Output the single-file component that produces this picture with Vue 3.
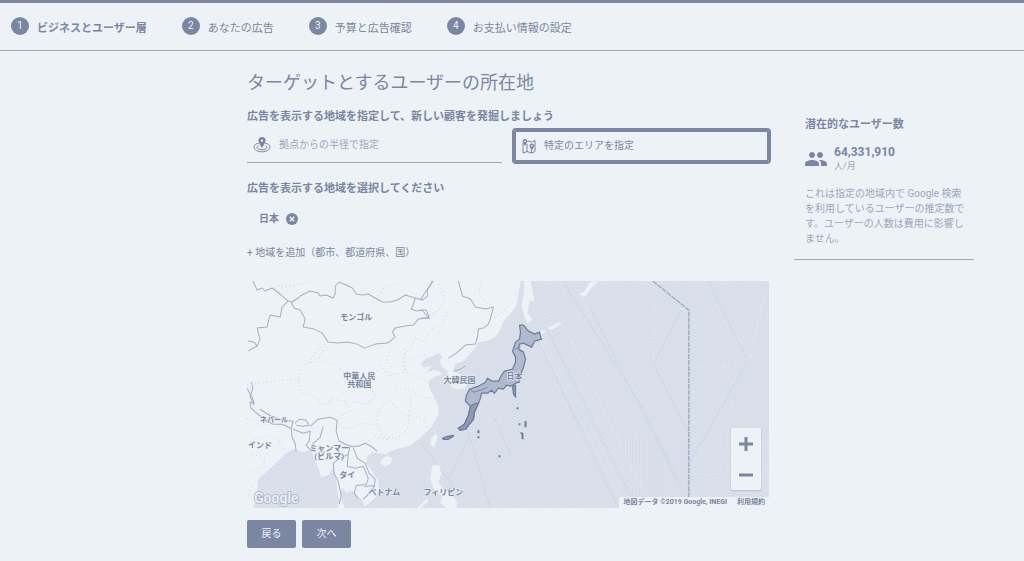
<script setup>
import { ref } from 'vue'

const steps = ['ビジネスとユーザー層', 'あなたの広告', '予算と広告確認', 'お支払い情報の設定']
const mode = ref('area')

const labels = [
  { x: 356, y: 321, t: 'モンゴル', s: 8 },
  { x: 359, y: 380, t: '中華人民', s: 8 },
  { x: 359, y: 388, t: '共和国', s: 8 },
  { x: 459, y: 384, t: '大韓民国', s: 8 },
  { x: 514, y: 380, t: '日本', s: 8 },
  { x: 274, y: 423, t: 'ネパール', s: 7 },
  { x: 260, y: 449, t: 'インド', s: 8 },
  { x: 329, y: 452, t: 'ミャンマー', s: 8 },
  { x: 329, y: 460, t: '(ビルマ)', s: 8 },
  { x: 347, y: 479, t: 'タイ', s: 8 },
  { x: 384, y: 496, t: 'ベトナム', s: 8 },
  { x: 443, y: 496, t: 'フィリピン', s: 8 },
]
</script>

<template>
  <div class="page">
    <header class="top">
      <ol class="steps">
        <li v-for="(s, i) in steps" :key="s" :class="{ current: i === 0 }">
          <span class="num">{{ i + 1 }}</span><span>{{ s }}</span>
        </li>
      </ol>
    </header>

    <div class="columns">
      <main>
        <h1>ターゲットとするユーザーの所在地</h1>
        <h2>広告を表示する地域を指定して、新しい顧客を発掘しましょう</h2>
        <div class="tabs">
          <button type="button" class="tab" :class="{ on: mode === 'radius' }" @click="mode = 'radius'">
            <svg width="18" height="16" viewBox="0 0 18 16" fill="none" stroke="currentColor" aria-hidden="true">
              <path d="M5.5 6.2C2.800 6.800 1 8.200 1 10c0 2.600 3.500 4.800 8 4.800s8-2.200 8-4.800c0-1.800-1.800-3.200-4.500-3.800" />
              <path d="M5.500 8.700C4.600 9.200 4 9.700 4 10.300c0 1.400 2.200 2.400 5 2.400s5-1 5-2.400c0-.6-.6-1.100-1.500-1.600" />
              <path fill="currentColor" fill-rule="evenodd" stroke="none" d="M9 0a3.600 3.600 0 0 0-3.600 3.600C5.400 6 9 11 9 11s3.600-5 3.600-7.400A3.600 3.600 0 0 0 9 0zm0 2.400a1.200 1.200 0 1 1 0 2.400 1.200 1.200 0 0 1 0-2.400z" />
            </svg>
            <span>拠点からの半径で指定</span>
          </button>
          <button type="button" class="tab" :class="{ on: mode === 'area' }" @click="mode = 'area'">
            <svg width="14" height="15" viewBox="0 0 14 15" fill="none" stroke="currentColor" aria-hidden="true">
              <path d="M1 3.500V14l4-1.500 4.500 1.500L13 12.500V1.500L9.500 3 5.500 1.800M5 5v7.500M9.500 9v5" />
              <path fill="currentColor" fill-rule="evenodd" stroke="none" d="M3 0a2.300 2.300 0 0 0-2.300 2.300C.7 4 3 6.800 3 6.800s2.300-2.800 2.300-4.500A2.300 2.300 0 0 0 3 0zm0 1.400a.9.9 0 1 1 0 1.800.9.900 0 0 1 0-1.800z" />
              <path fill="currentColor" fill-rule="evenodd" stroke="none" d="M9.800 4.500a2.300 2.300 0 0 0-2.300 2.300c0 1.700 2.300 4.500 2.300 4.500s2.300-2.800 2.300-4.500a2.300 2.300 0 0 0-2.300-2.300zm0 1.400a.9.9 0 1 1 0 1.800.9.900 0 0 1 0-1.800z" />
            </svg>
            <span>特定のエリアを指定</span>
          </button>
        </div>

        <h2>広告を表示する地域を選択してください</h2>
        <div class="chip">
          <span>日本</span>
          <button type="button" aria-label="日本を削除">
            <svg width="12" height="12" viewBox="0 0 12 12" aria-hidden="true">
              <circle cx="6" cy="6" r="6" fill="#7a86a2" />
              <path d="M3.800 3.800l4.400 4.400M8.200 3.800L3.800 8.200" stroke="#edf2f7" stroke-width="1.400" />
            </svg>
          </button>
        </div>
        <button type="button" class="add">+ 地域を追加（都市、都道府県、国）</button>

        <div class="map">
          <svg class="canvas" viewBox="247 282 521 227" role="img" aria-label="地図">
            <defs>
              <pattern id="hatchA" width="4" height="3" patternUnits="userSpaceOnUse" patternTransform="rotate(32)">
                <rect width="4" height="3" fill="#d6dde8" />
                <path d="M0 1H4" stroke="#dfe5ed" stroke-width="1" />
              </pattern>
              <pattern id="hatchB" width="4" height="3" patternUnits="userSpaceOnUse" patternTransform="rotate(-32)">
                <rect width="4" height="3" fill="#d6dde8" />
                <path d="M0 1H4" stroke="#dfe5ed" stroke-width="1" />
              </pattern>
              <pattern id="hatchC" width="3" height="4" patternUnits="userSpaceOnUse">
                <rect width="3" height="4" fill="#d6dde8" />
                <path d="M1 0V4" stroke="#dee4ec" stroke-width="1" />
              </pattern>
            </defs>
            <rect x="247" y="282" width="521" height="227" fill="#edf2f7" />
            <!-- sea -->
            <path fill="url(#hatchB)" d="M520 282L518 295 516 306 509 316 503 322 499 332 495 338 487 342 478 343 475 349 470 354 464 361 455 365 453 371 459 375 464 380 467 385 464 389 457 390 451 388 450 382 446 376 448 372 442 368 439 362 442 357 438 354 433 357 426 359 420 364 423 368 431 367 427 372 437 371 442 375 434 378 428 382 429 388 432 394 435 400 438 407 438 415 433 425 427 432 418 440 410 446 400 449 390 452 386 455 378 454 373 453 367 457 366 464 372 472 378 481 379 491 375 498 369 504 364 507 362 500 356 497 353 491 346 493 342 488 340 493 342 502 345 509H768V282Z" />
            <path fill="url(#hatchB)" d="M253 509L257 497 258 480 267 472 277 463 286 454 293 450 303 453 311 450 314 459 318 468 321 478 328 476 333 468 336 478 337 491 339 501 337 509Z" />
            <path fill="url(#hatchA)" d="M532 282H768V509H650L594 410Z" />
            <path fill="url(#hatchA)" d="M433 430L478 440 560 509H455L466 492Z" />
            <path fill="url(#hatchC)" d="M620 438H688V509H634Z" />
            <path fill="url(#hatchC)" d="M768 282V430H725L747 350Z" />
            <path fill="none" stroke="#d0d8e4" stroke-width="1" d="M532 330L618 509M547 331L636 509M562 282L640 405 690 509M590 309L675 480M652 364L688 435M680 311L653 364M707 282L747 362 688 465M688 362H742M494 419L510 455M466 425L490 509M420 443L458 494M470 435L448 480" />
            <path fill="none" stroke="#e6ebf2" stroke-width="1" d="M533 329L625 509M562 325L645 498M766 288L747 362M653 282V364M688 362H742M688 475L727 475V430" stroke-dasharray="1 2" />
            <!-- islands -->
            <g fill="#edf2f7">
              <path d="M524 282H530L534 303 529 301 527 314 532 321 527 324 524 318 521 307 523 297Z" />
              <path d="M540 333L544 331 545 333 541 336ZM547 329L555 325 560 323 560 325 551 331ZM579 295L584 292 589 283 598 282 590 290 584 298Z" />
              <path d="M381 460L387 457 392 459 390 465 384 467 380 464Z" />
              <path d="M431 438L436 434 437 439 434 448 430 446Z" />
              <path d="M432 466L439 466 441 475 438 483 443 490 452 495 457 503 456 509H447L440 504 442 497 433 489 430 479Z" />
              <path d="M427 499L428 502 420 509H416Z" />
            </g>
            <!-- country borders -->
            <g fill="none" stroke="#a5b0c5" stroke-width="1" stroke-linejoin="round">
              <path d="M253 282L257 291 262 289 265 292 272 289 280 295 288 302 292 303 298 299 300 297 310 292 318 294 320 297 326 296 333 299 335 295 335 287 339 283 346 286 352 289 356 295 362 296 368 295 375 299 382 303 390 303 397 301 405 296 415 299 422 301 427 297 427 291 432 282" />
              <path d="M415 299L413 305 411 310 416 312 422 311 425 315 429 319 418 320 413 326 405 327 395 329 392 333 395 338 387 344 375 345 364 349 357 345 347 343 338 344 328 343 322 334 314 330 303 328 305 320 300 311 294 309 291 303" />
              <path d="M288 302L282 308 280 318 270 316 267 328 257 329 260 340 257 347 248 352M248 342L254 343 257 347" />
              <path d="M458 282L462 297 470 300 475 308 485 310 493 308 490 319 488 325 483 329 478 330 477 338 475 345 465 346 456 354 448 359M433 282L425 293 420 301M420 311L426 311 429 319 420 319M453 372L460 370 465 367" />
              <path d="M247 389L252 398 254 404 250 403 251 409 258 415 266 421 273 425 282 425 291 429 293 422 283 421 271 417 260 410" />
              <path d="M295 424L299 420 306 421 309 426 303 427 296 426M291 428L292 438 295 444 296 452M293 430L303 434 310 432 309 442 306 446 311 451M310 427L318 420 330 418 337 421 336 432 339 442 350 447 348 455 338 460 333 464 334 474 338 482 341 496 339 505M323 427L320 438 312 445" />
              <path d="M350 447L358 447 365 444 371 447 377 452M353 448L357 459 365 464 369 474 375 480 374 487 367 496 363 500M348 455L347 467 355 469 363 467 368 479 366 485 356 486 354 494 358 499M364 487L374 486" />
              <path d="M251 383L253 389 250 397 254 406" />
            </g>
            <!-- province borders -->
            <g fill="none" stroke="#ccd4df" stroke-width="1" stroke-dasharray="1 3">
              <path d="M274 289L285 285 295 290 300 298M282 289L310 283M378 297L384 287 397 284M481 282L478 292 485 302 493 308M495 319L505 310 510 305M438 285L445 299 440 309 428 319M447 313L442 326 430 330 424 341" />
              <path d="M328 343L317 351 310 363 302 367 298 382 301 393 315 398 323 406 333 400 345 402 350 410 343 416 338 423M247 386L258 384 280 381 300 380M310 363L328 362 342 370 351 386 368 387 377 397 365 405 353 402M380 366L388 377 404 373 402 360 410 349 415 338 426 344M390 349L386 362 393 370M404 350L405 372 416 378 428 382M396 389L411 391 420 398 435 399M390 402L378 411 377 426 382 437 397 439 407 430 409 417 397 411 391 402M411 399L409 416 424 420 427 431M338 428L352 429 362 424 377 426M365 444L375 437 390 441" />
              <path d="M247 419L261 426 276 425M250 442L265 436 278 440 284 450M252 455L265 458 262 468 250 472M252 487L247 498M425 355L413 360M319 359L326 347M371 378L378 369" />
            </g>
            <!-- selected country -->
            <g fill="#b0bace" stroke="#6f7c9d" stroke-width="1.200" stroke-linejoin="round">
              <path d="M519 326L523 326 528 332 534 335 539 333 540 338 541 340 534 342 531 348 523 344 519 345 518 350 523 353 525 360 523 368 521 373 519 380 519 383 515 384 510 387 506 386 503 390 498 389 494 394 491 391 487 394 481 394 480 399 478 404 474 413 473 420 468 426 465 430 460 431 458 429 464 425 468 416 470 407 465 402 466 396 469 390 478 387 485 383 487 379 492 382 498 382 501 376 504 372 512 370 515 363 515 358 512 352 515 343 519 340 520 333Z" />
              <path fill="#8e99b3" d="M470 407L475 404 478 404 474 413 473 420 468 426 465 430 460 431 458 429 464 425 468 416ZM512 387L515 386 515 398 513 395ZM442 439L447 437 453 436 453 437 448 440 443 440Z" />
              <path fill="none" d="M469 390L473 393 480 391 487 388M514 350L520 348" stroke-width="0.800" />
            </g>
            <path d="M517 408v2M519 424v2M525 422v6M521 433v2M522 434v6M478 431v3M478 437v2M499 456v2" stroke="#6f7c9d" stroke-width="2" />
            <path d="M652 282L688 311V498" fill="none" stroke="#a3adc4" stroke-width="1.500" stroke-dasharray="5 1" />
            <text v-for="l in labels" :key="l.t" class="place" :x="l.x" :y="l.y" :font-size="l.s">{{ l.t }}</text>
            <text class="brand" x="254" y="504">Google</text>
          </svg>
          <div class="zoom">
            <button type="button" aria-label="拡大">
              <svg width="14" height="14" viewBox="0 0 14 14"><path d="M7 0v14M0 7h14" stroke="#7a86a2" stroke-width="3" /></svg>
            </button>
            <button type="button" aria-label="縮小">
              <svg width="14" height="14" viewBox="0 0 14 14"><path d="M0 7h14" stroke="#7a86a2" stroke-width="3" /></svg>
            </button>
          </div>
          <div class="credit"><span>地図データ ©2019 Google, INEGI</span><a href="#">利用規約</a></div>
        </div>

        <div class="actions">
          <button type="button">戻る</button>
          <button type="button">次へ</button>
        </div>
      </main>

      <aside>
        <h3>潜在的なユーザー数</h3>
        <div class="reach">
          <svg width="24" height="24" viewBox="0 0 24 24" fill="currentColor" aria-hidden="true">
            <path d="M16 11c1.660 0 2.990-1.340 2.990-3S17.660 5 16 5s-3 1.340-3 3 1.340 3 3 3zm-8 0c1.660 0 2.990-1.340 2.990-3S9.660 5 8 5 5 6.340 5 8s1.340 3 3 3zm0 2c-2.330 0-7 1.170-7 3.500V19h14v-2.500c0-2.330-4.670-3.500-7-3.500zm8 0c-.29 0-.62.020-.97.050 1.160.84 1.970 1.970 1.970 3.450V19h6v-2.500c0-2.330-4.670-3.500-7-3.500z" />
          </svg>
          <div><strong>64,331,910</strong><small>人/月</small></div>
        </div>
        <p>これは指定の地域内で Google 検索を利用しているユーザーの推定数です。ユーザーの人数は費用に影響しません。</p>
      </aside>
    </div>
  </div>
</template>

<style>
body {
  background: #edf2f7;
}
</style>

<style scoped>
.page {
  font-family: Roboto, "Noto Sans CJK JP", sans-serif;
  color: #7a86a2;
  font-size: 11px;
  line-height: 16px;
}
h1, h2, h3, p, ol {
  margin: 0;
  padding: 0;
}
button {
  font: inherit;
  color: inherit;
  background: none;
  border: 0;
  padding: 0;
  cursor: pointer;
}
svg {
  display: block;
  flex: none;
}
.top {
  border-top: 3px solid #7a86a2;
  border-bottom: 1px solid #9ca7be;
  padding: 14px 11px;
}
.steps {
  display: flex;
  gap: 35px;
  list-style: none;
}
.steps li {
  display: flex;
  align-items: center;
  gap: 8px;
  height: 19px;
}
.steps li span:last-child {
  padding-top: 4px;
}
.steps .current {
  font-weight: 700;
}
.num {
  width: 18px;
  height: 18px;
  margin-top: -2px;
  border-radius: 50%;
  background: #7a86a2;
  color: #edf2f7;
  text-align: center;
  line-height: 18px;
  font-size: 10px;
  font-weight: 400;
}
.columns {
  display: grid;
  grid-template-columns: minmax(0, 1fr) 180px;
  gap: 25px;
  align-items: start;
  padding: 19px 50px 0 247px;
}
h1 {
  font-size: 18px;
  line-height: 26px;
  font-weight: 400;
}
h2 {
  margin-top: 13px;
  font-size: 11px;
  line-height: 16px;
  font-weight: 700;
}
.tabs {
  display: grid;
  grid-template-columns: 1fr 1fr;
  gap: 12px;
  margin: 3px 0 17px;
}
.tab {
  display: flex;
  align-items: center;
  gap: 8px;
  height: 35px;
  padding: 0 6px;
  border-bottom: 1px solid #9ca7be;
  color: #7a86a2;
  font-size: 10px;
}
.tab:not(.on) span {
  color: #9ca7be;
}
.tab.on {
  height: 32px;
  margin: 2px 0;
  border: 2px solid #7a86a2;
  border-radius: 2px;
  box-shadow: 0 0 0 2px #7a86a2;
}
.chip {
  display: flex;
  align-items: center;
  gap: 7px;
  margin: 14px 12px;
  font-size: 10px;
  font-weight: 700;
}
.add {
  display: block;
  margin-top: 18px;
  font-size: 10px;
}
.map {
  position: relative;
  margin-top: 20px;
}
.canvas {
  width: 100%;
  height: auto;
}
.place {
  text-anchor: middle;
  font-weight: 700;
  fill: #7a86a2;
  stroke: #edf2f7;
  stroke-width: 1px;
  paint-order: stroke;
}
.brand {
  font-size: 14px;
  font-weight: 500;
  fill: #edf2f7;
  stroke: #b0bace;
  stroke-width: 2px;
  paint-order: stroke;
}
.zoom {
  position: absolute;
  right: 8px;
  bottom: 18px;
  display: grid;
  background: #edf2f7;
  border-radius: 2px;
  box-shadow: 0 1px 2px #b0bace;
}
.zoom button {
  display: grid;
  place-items: center;
  width: 30px;
  height: 31px;
}
.credit {
  position: absolute;
  right: 0;
  bottom: 0;
  display: flex;
  gap: 10px;
  padding: 0 4px;
  background: #edf2f7;
  font-size: 7px;
  line-height: 11px;
  font-weight: 700;
}
.credit a {
  color: inherit;
  text-decoration: none;
}
.actions {
  display: flex;
  gap: 6px;
  margin-top: 12px;
}
.actions button {
  width: 49px;
  height: 28px;
  border-radius: 2px;
  background: #7a86a2;
  color: #edf2f7;
  font-size: 10px;
}
aside {
  margin-top: 47px;
  padding: 0 12px 13px 11px;
  border-bottom: 1px solid #9ca7be;
}
h3 {
  font-size: 11px;
  font-weight: 700;
}
.reach {
  display: flex;
  align-items: center;
  gap: 6px;
  margin: 11px -1px 13px;
}
.reach strong,
.reach small {
  display: block;
}
.reach strong {
  font-size: 12px;
  line-height: 16px;
  font-weight: 700;
}
.reach small {
  font-size: 9px;
  line-height: 13px;
  color: #9ca7be;
}
aside p {
  margin-right: -4px;
  font-size: 10px;
  line-height: 15px;
  color: #9ca7be;
}
</style>
